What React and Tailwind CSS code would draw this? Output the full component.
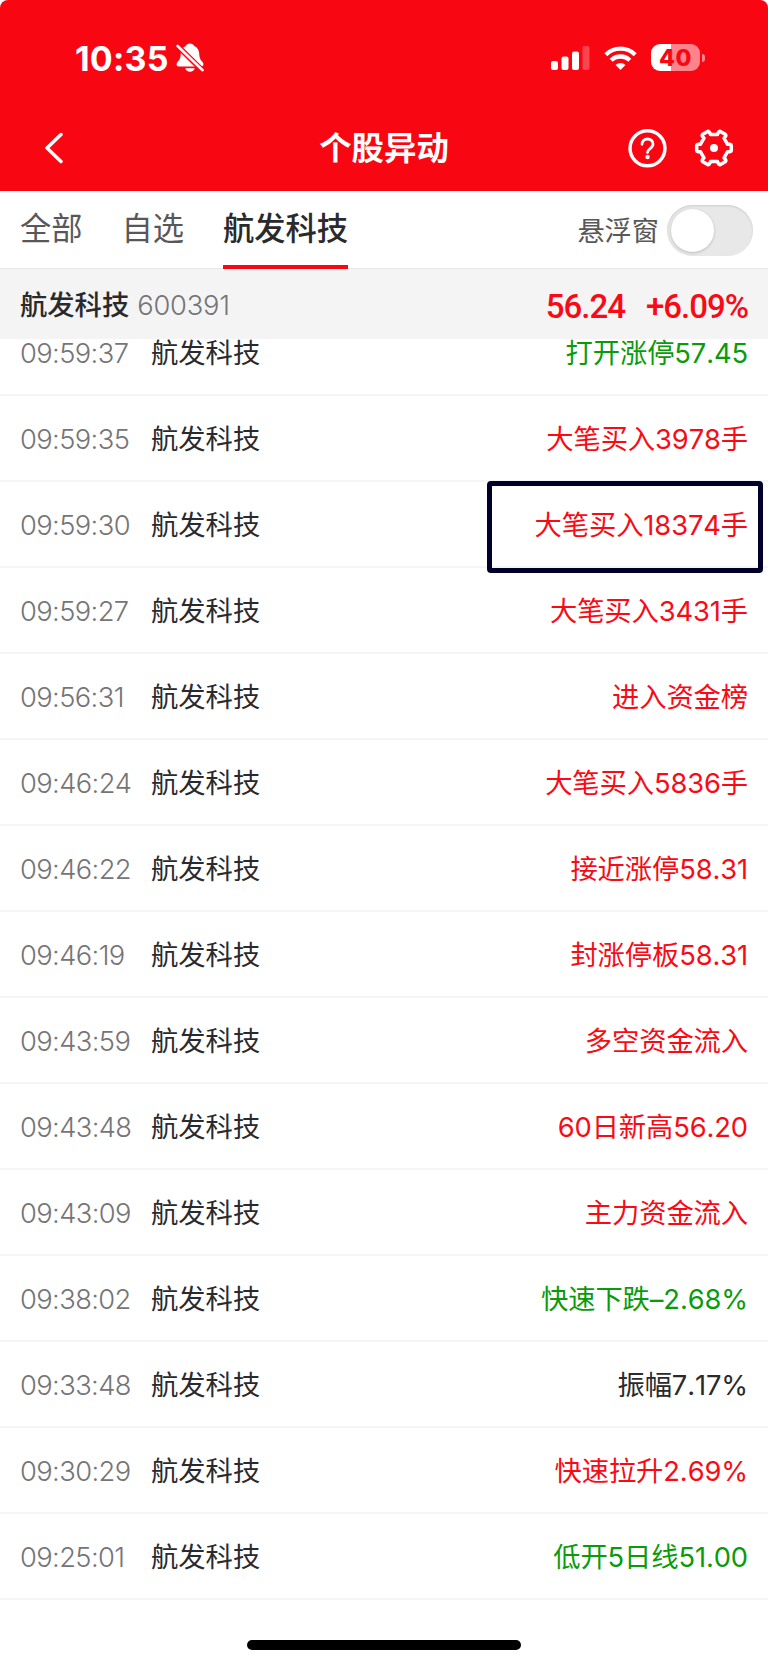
import clsx from 'clsx'

const tones = { up: 'text-[#f90a14]', down: 'text-[#0a9b0a]', flat: 'text-[#2a2a2c]' }

const tabs = [
  { label: '全部' },
  { label: '自选' },
  { label: '航发科技', active: true },
]

const events = [
  { time: '09:59:37', text: '打开涨停57.45', tone: 'down' },
  { time: '09:59:35', text: '大笔买入3978手', tone: 'up' },
  { time: '09:59:30', text: '大笔买入18374手', tone: 'up', marked: true },
  { time: '09:59:27', text: '大笔买入3431手', tone: 'up' },
  { time: '09:56:31', text: '进入资金榜', tone: 'up' },
  { time: '09:46:24', text: '大笔买入5836手', tone: 'up' },
  { time: '09:46:22', text: '接近涨停58.31', tone: 'up' },
  { time: '09:46:19', text: '封涨停板58.31', tone: 'up' },
  { time: '09:43:59', text: '多空资金流入', tone: 'up' },
  { time: '09:43:48', text: '60日新高56.20', tone: 'up' },
  { time: '09:43:09', text: '主力资金流入', tone: 'up' },
  { time: '09:38:02', text: '快速下跌–2.68%', tone: 'down' },
  { time: '09:33:48', text: '振幅7.17%', tone: 'flat' },
  { time: '09:30:29', text: '快速拉升2.69%', tone: 'up' },
  { time: '09:25:01', text: '低开5日线51.00', tone: 'down' },
]

function BellOff() {
  return (
    <svg className="ml-[7px] h-[29px] w-7" viewBox="0 0 28 29" fill="none">
      <path
        d="M14 .5c-2 0-3.600 1-4.300 2.400C6.600 4.300 5 7 4.800 10.300c-.2 4.500-.9 6-2.900 8.300C.9 19.800.6 20.700.6 21.500c0 1.200.9 2 2.300 2h22.200c1.400 0 2.300-.8 2.300-2 0-.8-.3-1.700-1.300-2.900-2-2.300-2.700-3.800-2.900-8.300-.2-3.300-1.800-6-4.900-7.400C17.600 1.500 16 .5 14 .5Z"
        fill="#fff"
      />
      <path d="M9.300 25.300h9.400c-.5 2-2.300 3.400-4.700 3.400s-4.200-1.400-4.700-3.400Z" fill="#fff" />
      <path d="M0 1.500 28 29" stroke="#f90613" strokeWidth="5.500" />
      <path d="M1.600 3 26.600 27.200" stroke="#fff" strokeWidth="2.600" strokeLinecap="round" />
    </svg>
  )
}

function StatusBar() {
  return (
    <div className="flex h-[104px] items-center pt-[11px] pr-[63px] pl-[75px] text-white">
      <span className="pt-px text-[34px] font-bold tracking-[0.2px]">10:35</span>
      <BellOff />
      <svg className="ml-auto h-6 w-[39px]" viewBox="0 0 39 24" fill="#fff">
        <rect x="0" y="15" width="7" height="9" rx="2" />
        <rect x="10.500" y="10.500" width="7" height="13.500" rx="2" />
        <rect x="21" y="5.500" width="7" height="18.500" rx="2" />
        <rect x="31.500" y="0" width="7" height="24" rx="2" opacity=".25" />
      </svg>
      <svg className="ml-[14px] h-6 w-[33px]" viewBox="0 0 33 24" fill="none" stroke="#fff" strokeWidth="4.300">
        <path d="M1.800 8.700a21 21 0 0 1 29.400 0" />
        <path d="M7.200 14.300a13.300 13.300 0 0 1 18.600 0" />
        <path d="m16.500 24-5-5a7.200 7.200 0 0 1 10 0Z" fill="#fff" stroke="none" />
      </svg>
      <div className="ml-[14px] flex h-[27px] w-[49px] items-center justify-center rounded-[9px] bg-[linear-gradient(90deg,#fff_0_20px,#ff838b_20px)] pt-px text-[23px] leading-none font-extrabold tracking-[0.6px] text-[#f90613]">
        40
      </div>
      <div className="ml-0.5 h-2 w-[3px] rounded-r-full bg-[#ff838b]" />
    </div>
  )
}

function NavBar() {
  return (
    <div className="flex h-[87px] items-center justify-between pr-[34px] pl-[43px] text-white">
      <div className="flex w-[98px]">
        <svg className="h-8 w-5" viewBox="0 0 20 32" fill="none" stroke="#fff" strokeWidth="3.500" strokeLinecap="round" strokeLinejoin="round">
          <path d="M18 2.500 4 16l14 13.500" />
        </svg>
      </div>
      <h1 className="pt-1 text-[32.400px] font-bold">个股异动</h1>
      <div className="flex items-center gap-[27px]">
        <svg className="size-10" viewBox="0 0 40 40" fill="none" stroke="#fff" strokeWidth="3.400" strokeLinecap="round">
          <circle cx="20.500" cy="20.300" r="17.500" />
          <path d="M15 16.300c0-3.300 2.300-5.300 5.500-5.300s5.500 2 5.500 5c0 2.600-1.600 3.700-3.300 5-1.500 1.100-2.200 1.900-2.200 3.400" strokeWidth="2.800" />
          <circle cx="20.500" cy="29" r="2.200" fill="#fff" stroke="none" />
        </svg>
        <svg className="size-10" viewBox="-20 -20 40 40" fill="none" stroke="#fff" strokeWidth="3.500" strokeLinejoin="round">
          <path d="M-3.600-13.600H3.600Q4.300-16.400 6-16.800L11.600-13.400Q12.700-12.100 10-9.900L13.600-3.700Q17.300-4.300 17.300-2.500V2.500Q17.300 4.300 13.600 3.700L10 9.900Q12.700 12.100 11.600 13.400L6 16.800Q4.300 16.400 3.600 13.600H-3.600Q-4.300 16.400-6 16.800L-11.600 13.400Q-12.700 12.100-10 9.900L-13.600 3.700Q-17.300 4.300-17.300 2.500V-2.500Q-17.300-4.300-13.600-3.700L-10-9.900Q-12.700-12.100-11.600-13.400L-6-16.800Q-4.300-16.400-3.600-13.600Z" />
          <circle r="4" fill="#fff" stroke="none" />
        </svg>
      </div>
    </div>
  )
}

function TabBar() {
  return (
    <div className="flex h-[78px] items-center border-b border-[#e8e8e8] bg-white pr-[15px] pl-5">
      <div className="flex h-full gap-[39px]">
        {tabs.map((tab) => (
          <div
            key={tab.label}
            className={clsx(
              '-mb-px flex items-center border-b-4 pt-[3px] text-[31.250px]',
              tab.active ? 'border-[#f90613] font-medium text-[#2a2a2c]' : 'border-transparent text-[#58585a]',
            )}
          >
            {tab.label}
          </div>
        ))}
      </div>
      <span className="ml-auto pt-1.5 text-[27.200px] text-[#58585a]">悬浮窗</span>
      <div className="mt-0.5 ml-2 h-[51px] w-[86px] rounded-full bg-[#e8e8e8] p-1 shadow-[inset_0_1px_2px_#ccc]">
        <div className="size-[43px] rounded-full bg-white shadow-[0_1px_3px_#bbb]" />
      </div>
    </div>
  )
}

function StockSummary() {
  return (
    <div className="flex h-[70px] items-center bg-[#f4f4f4] px-5 pt-1 text-[27.300px]">
      <span className="font-medium text-[#2a2a2c]">航发科技</span>
      <span className="ml-2 font-light tracking-[-0.2px] text-[#757577]">600391</span>
      <div className="ml-auto flex gap-[21px] pt-px font-[Roboto] text-[33px] font-medium tracking-[-1px] text-[#f90a14]">
        <span>56.24</span>
        <span>+6.09%</span>
      </div>
    </div>
  )
}

function EventRow({ time, text, tone, marked, first }) {
  return (
    <div
      className={clsx(
        'relative flex border-b-2 border-[#f5f5f5] px-5 text-[27.300px] leading-7 [font-kerning:none]',
        first ? 'h-[57px] items-start pt-px' : 'h-[86px] items-center pt-1',
      )}
    >
      <span className="w-[131px] font-light tracking-[-0.6px] text-[#757577]">{time}</span>
      <span className="text-[#2a2a2c]">航发科技</span>
      <span className={clsx('ml-auto tracking-[-0.1px]', tones[tone])}>{text}</span>
      {marked && <div className="absolute top-[-1px] right-[5px] z-10 h-[92px] w-[276px] rounded border-5 border-[#00002b]" />}
    </div>
  )
}

export default function App() {
  return (
    <div className="flex h-[1667px] w-[768px] flex-col overflow-hidden bg-white font-[Inter,'Noto_Sans_CJK_SC',sans-serif]">
      <header className="rounded-t-[8px] bg-[#f90613]">
        <StatusBar />
        <NavBar />
      </header>
      <TabBar />
      <StockSummary />
      <main>
        {events.map((event, i) => (
          <EventRow key={event.time} first={i === 0} {...event} />
        ))}
      </main>
      <div className="mx-auto mt-10 h-2.5 w-[274px] shrink-0 rounded-full bg-black" />
    </div>
  )
}
